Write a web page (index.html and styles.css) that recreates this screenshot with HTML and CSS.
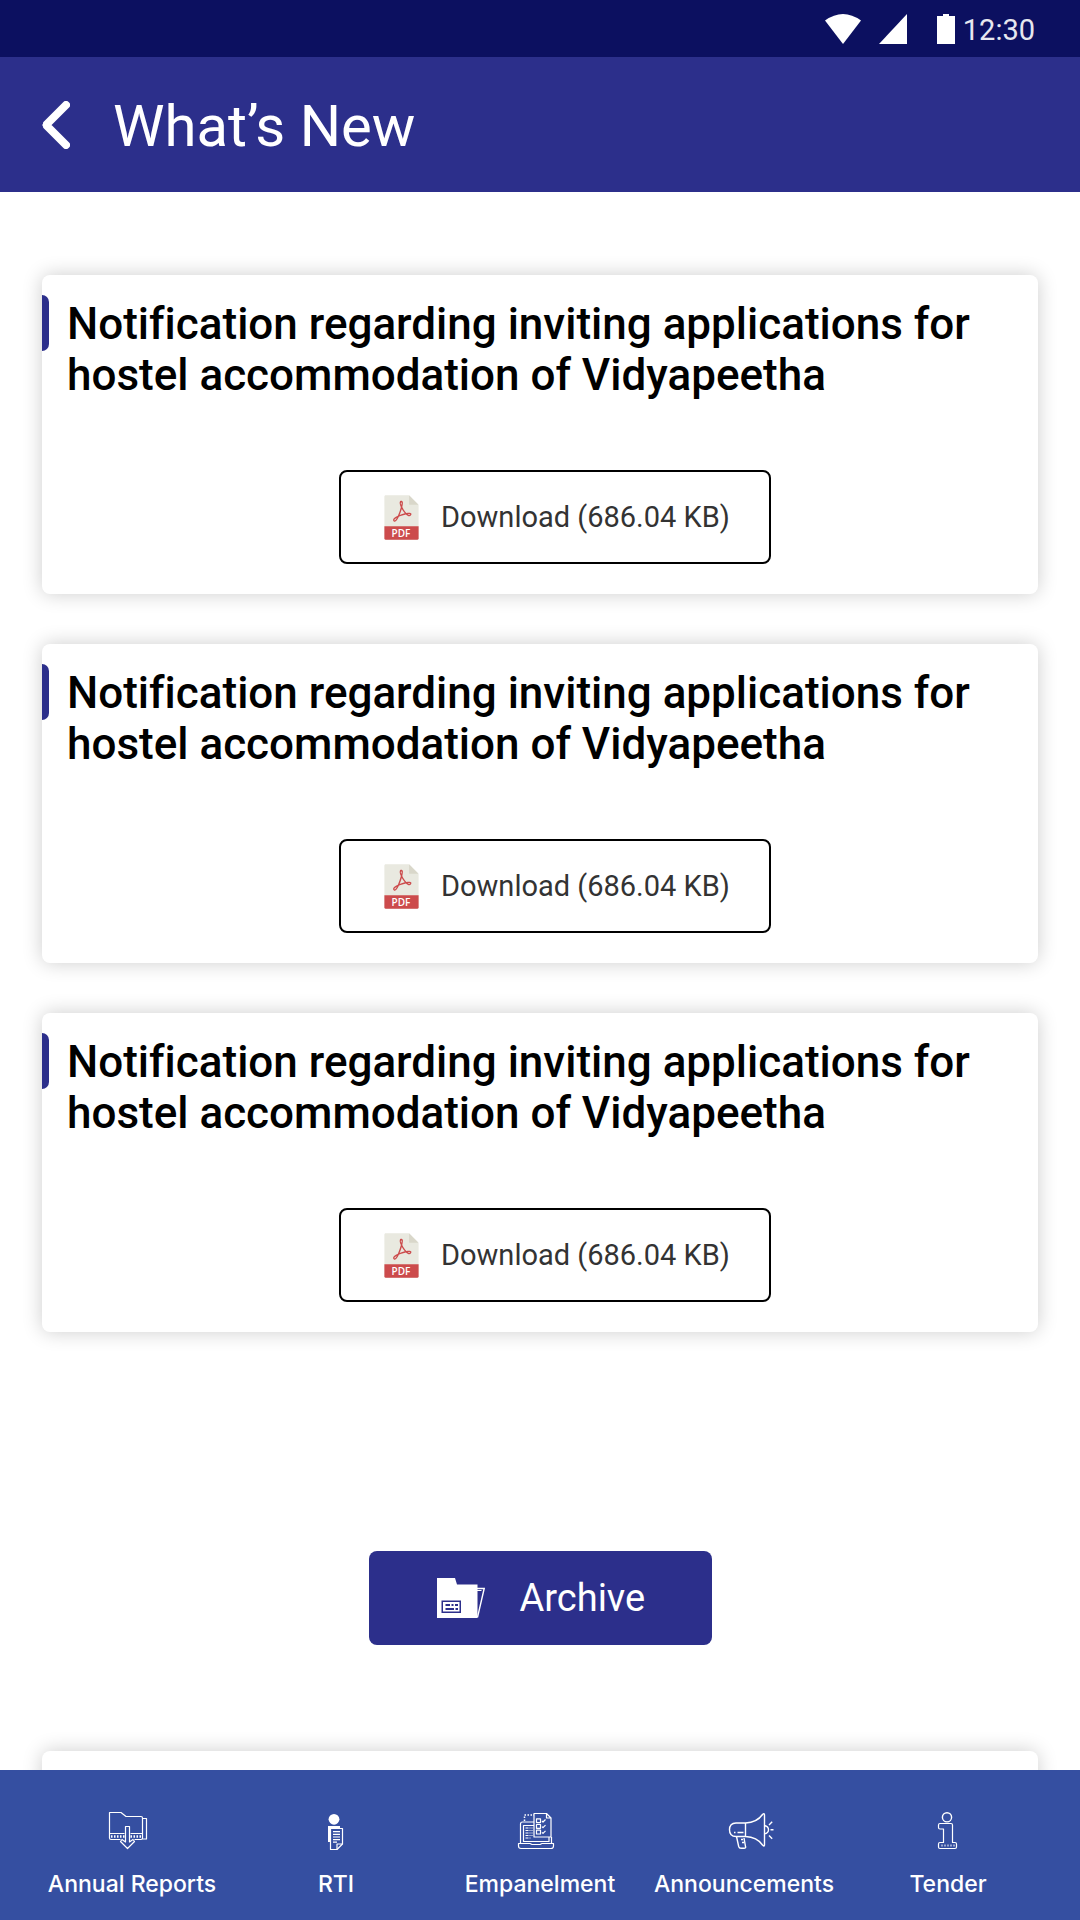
FILE: index.html
```html
<!DOCTYPE html>
<html lang="en">
<head>
<meta charset="utf-8">
<meta name="viewport" content="width=device-width, initial-scale=1">
<title>What’s New</title>
<link rel="stylesheet" href="styles.css">
</head>
<body>
<svg class="sprite" aria-hidden="true">
  <symbol id="pdf" viewBox="6 0 44 56">
    <path fill="#e9e9e0" d="M36.985,0H7.963C7.155,0,6.5,0.655,6.5,1.926V55c0,0.345,0.655,1,1.463,1h40.074c0.808,0,1.463-0.655,1.463-1V12.978c0-0.696-0.093-0.92-0.257-1.085L37.607,0.257C37.442,0.093,37.218,0,36.985,0z"/>
    <path fill="#d9d7ca" d="M37.5,0.151V12h11.849z"/>
    <path fill="#cc4b4c" d="M19.514,33.324L19.514,33.324c-0.348,0-0.682-0.113-0.967-0.326c-1.041-0.781-1.181-1.65-1.115-2.242c0.182-1.628,2.195-3.332,5.985-5.068c1.504-3.296,2.935-7.357,3.788-10.75c-0.998-2.172-1.968-4.99-1.261-6.643c0.248-0.579,0.557-1.023,1.134-1.215c0.228-0.076,0.804-0.172,1.016-0.172c0.504,0,0.947,0.649,1.261,1.049c0.295,0.376,0.964,1.173-0.373,6.802c1.348,2.784,3.258,5.62,5.088,7.562c1.311-0.237,2.439-0.358,3.358-0.358c1.566,0,2.515,0.365,2.902,1.117c0.32,0.622,0.189,1.349-0.39,2.16c-0.557,0.779-1.325,1.191-2.22,1.191c-1.216,0-2.632-0.768-4.211-2.285c-2.837,0.593-6.15,1.651-8.828,2.822c-0.836,1.774-1.637,3.203-2.383,4.251C21.273,32.654,20.389,33.324,19.514,33.324z M22.176,28.198c-2.137,1.201-3.008,2.188-3.071,2.744c-0.01,0.092-0.037,0.334,0.431,0.692C19.685,31.587,20.555,31.19,22.176,28.198z M35.813,23.756c0.815,0.627,1.014,0.944,1.547,0.944c0.234,0,0.901-0.01,1.21-0.441c0.149-0.209,0.207-0.343,0.23-0.415c-0.123-0.065-0.286-0.197-1.175-0.197C37.12,23.648,36.485,23.67,35.813,23.756z M28.343,17.174c-0.715,2.474-1.659,5.145-2.674,7.564c2.09-0.811,4.362-1.519,6.496-2.02C30.815,21.15,29.466,19.192,28.343,17.174z M27.736,8.712c-0.098,0.033-1.33,1.757,0.096,3.216C28.781,9.813,27.779,8.698,27.736,8.712z"/>
    <path fill="#cc4b4c" d="M48.037,56H7.963C7.155,56,6.5,55.345,6.5,54.537V39h43v15.537C49.5,55.345,48.845,56,48.037,56z"/>
  </symbol>
</svg>

<div class="status">
  <svg width="36" height="30" viewBox="0 0 36 30" fill="#fff" aria-hidden="true"><path d="M0 6.500Q18-6.500 36 6.500L18 30z"/></svg>
  <svg width="28" height="30" viewBox="0 0 28 30" fill="#fff" aria-hidden="true"><path d="M28 0v30H0z"/></svg>
  <svg class="battery" width="18" height="30" viewBox="0 0 18 30" fill="#fff" aria-hidden="true"><path d="M6 0h6v2h6v28H0V2h6z"/></svg>
  <span class="time">12:30</span>
</div>

<header class="header">
  <button class="back" aria-label="Back">
    <svg width="28" height="48" viewBox="0 0 28 48" fill="none" stroke="#fff" stroke-width="8" stroke-linecap="round" stroke-linejoin="bevel" aria-hidden="true"><path d="M24 4L4 24l20 20"/><path d="M5 22L3 24l2 2" stroke-width="5" stroke-linejoin="round"/></svg>
  </button>
  <h1 class="title">What’s New</h1>
</header>

<main class="content">
  <article class="card">
    <h2 class="card-title">Notification regarding inviting applications for hostel accommodation of Vidyapeetha</h2>
    <button class="download"><svg width="35" height="45" aria-hidden="true"><use href="#pdf"/><text class="pdf-label" x="17" y="42" text-anchor="middle">PDF</text></svg>Download (686.04 KB)</button>
  </article>
  <article class="card">
    <h2 class="card-title">Notification regarding inviting applications for hostel accommodation of Vidyapeetha</h2>
    <button class="download"><svg width="35" height="45" aria-hidden="true"><use href="#pdf"/><text class="pdf-label" x="17" y="42" text-anchor="middle">PDF</text></svg>Download (686.04 KB)</button>
  </article>
  <article class="card">
    <h2 class="card-title">Notification regarding inviting applications for hostel accommodation of Vidyapeetha</h2>
    <button class="download"><svg width="35" height="45" aria-hidden="true"><use href="#pdf"/><text class="pdf-label" x="17" y="42" text-anchor="middle">PDF</text></svg>Download (686.04 KB)</button>
  </article>
  <button class="archive">
    <svg width="48" height="40" viewBox="0 0 48 40" aria-hidden="true">
      <path fill="#fff" d="M0 0h18l2 6.500h20.500V32L40.500 40H0z"/>
      <path fill="none" stroke="#fff" stroke-width="1.400" d="M40 10.500h7.200L40.500 39.300"/>
      <path fill="none" stroke="#fff" stroke-width="1" d="M40 12.500h4.500"/>
      <path fill="#2c2f8b" d="M4.500 22.500H24V35H4.500zM6 24v9.500h16.500V24z" fill-rule="evenodd"/>
      <path fill="none" stroke="#2c2f8b" stroke-width="2" d="M8.500 27h4.500M14.500 27h2M18 27h3M8.500 31h8.500M18.500 31h2.500"/>
    </svg>
    Archive
  </button>
  <article class="card"></article>
</main>

<nav class="tabs" aria-label="Sections">
  <a class="tab" href="#reports">
    <svg class="tab-icon" viewBox="0 0 60 40" aria-hidden="true">
      <path d="M18.500 28.500H9q-1.500 0-1.500-1.500V1.500H19L24 5.500h15q1.500 0 1.500 1.500v20q0 1.500-1.500 1.500h-6.500M40.500 7.500h4v20.500h-5M7.500 22.500h15M28.500 22.500h12"/>
      <path d="M9 25.500h14M28.500 25.500h11" stroke-width="2.500" stroke-dasharray="1.500 1.500"/>
      <path d="M23.500 15.500h4V31l3.500-2.500 1.500 2L25.500 37.500l-7-7 1.500-2 3.500 2.500z"/>
    </svg>
    Annual Reports
  </a>
  <a class="tab" href="#rti">
    <svg class="tab-icon" viewBox="0 0 60 40" aria-hidden="true">
      <circle class="solid" cx="28" cy="8.300" r="5.400"/>
      <path class="solid" d="M22 15h12v3H24.500v13H22z"/>
      <path d="M24.500 17.500h12V33l-5.500 5.500h-6.500z"/>
      <path d="M27 20.700h7M27 23.300h7M27 26h7M27 28.600h7M27 31.200h4M31 38.500V33h5.500"/>
    </svg>
    RTI
  </a>
  <a class="tab" href="#empanelment">
    <svg class="tab-icon" viewBox="0 0 60 40" aria-hidden="true">
      <path d="M24 11H12.500q-2 0-2 2v19.500M41.500 26v6.500M24 14.500H13.500v16H39V26"/>
      <path d="M8.500 32.500H20l2 1h8l2-1h11.500V35q0 2.500-2.500 2.500H11Q8.500 37.500 8.500 35z"/>
      <path d="M24 2.500h12.500l4.500 4.500V26H24zM36.500 2.500V7H41"/>
      <path d="M26.500 7.800h4v3.800h-4zM26.500 13.500h4v3.800h-4zM26.500 19.200h4v3.800h-4zM32 10l1 1 2.500-2.500M32 15.700l1 1 2.500-2.500M32 21.400l1 1 2.500-2.500"/>
      <path d="M15.500 17h7M15.500 19.500h7M15.500 22h7M15.500 24.500h7M15.500 27h5" stroke-dasharray="3 1 1 1"/>
      <path d="M14.500 10V4H24" stroke-width="1.500" stroke-dasharray="1.500 1.500"/>
    </svg>
    Empanelment
  </a>
  <a class="tab" href="#announcements">
    <svg class="tab-icon" viewBox="0 0 60 40" aria-hidden="true">
      <path stroke-width="1.400" d="M31.500 12H22q-6.500 0-6.500 6.700T22 25.500h9.500zM31.500 12Q43 11.500 48.500 3.500q2-2 2 .500v30q0 2-2 0Q43 26 31.500 25.500M50.500 14.500q4 1 4 4.200t-4 4.200M55 14l3.200-3.300M56.500 18.700h3M55 24.500l3.200 3.300M22.500 25.500l2.200 10q.500 1.800 2.300 1.800h3q2 0 1.500-1.800l-1.500-8.500M27 28.500h2M28 31.500h2M20 21.500h1.500M23.500 21.500h6"/>
    </svg>
    Announcements
  </a>
  <a class="tab" href="#tender">
    <svg class="tab-icon" viewBox="0 0 60 40" aria-hidden="true">
      <circle cx="29" cy="6.300" r="4.600" stroke-width="1.400"/>
      <path d="M22 12.500h11q1.500 0 1.500 1.500v17.500h2.500q1.500 0 1.500 1.500v3q0 1.500-1.500 1.500H22q-1.500 0-1.500-1.500v-3q0-1.500 1.500-1.500h3.500V18H22q-1.500 0-1.500-1.500V14q0-1.500 1.500-1.500z"/>
      <path d="M23.500 34.500h13" stroke-width="2" stroke-dasharray="1 2"/>
    </svg>
    Tender
  </a>
</nav>
</body>
</html>
```

FILE: styles.css
```css
* { box-sizing: border-box; }

body {
  margin: 0;
  height: 100vh;
  display: flex;
  flex-direction: column;
  background: #fff;
  color: #000;
  font-family: Roboto, "Liberation Sans", sans-serif;
}

button {
  border: 0;
  padding: 0;
  background: none;
  color: inherit;
  font: inherit;
  cursor: pointer;
}

svg { flex: none; display: block; }

.sprite { position: absolute; width: 0; height: 0; }

.pdf-label {
  fill: #fff;
  font: 600 10px "Open Sans", sans-serif;
}

.status {
  display: flex;
  justify-content: flex-end;
  align-items: center;
  gap: 18px;
  height: 57px;
  padding-right: 45px;
  background: #0c1060;
  flex: none;
}

.battery { margin-left: 12px; }

.time {
  margin-left: -10px;
  padding-top: 2px;
  color: #e7e7ef;
  font-size: 29px;
  font-weight: 400;
}

.header {
  display: flex;
  align-items: center;
  gap: 43px;
  height: 135px;
  padding: 0 42px;
  background: #2c2f8b;
  color: #fff;
  flex: none;
}

.title {
  margin: 0;
  padding-top: 2px;
  font-size: 58px;
  font-weight: 400;
  line-height: 66px;
}

.content {
  flex: 1;
  min-height: 0;
  overflow: hidden;
  display: flex;
  flex-direction: column;
  gap: 50px;
  padding: 83px 42px 0;
}

.card {
  position: relative;
  flex: none;
  display: flex;
  flex-direction: column;
  align-items: center;
  min-height: 319px;
  padding: 24px 0 30px;
  border-radius: 8px;
  background: #fff;
  box-shadow: 0 0 20px rgba(0, 0, 0, 0.2);
}

.card-title {
  align-self: stretch;
  margin: 0 0 69px;
  padding: 0 25px;
  font-size: 44px;
  font-weight: 500;
  line-height: 51px;
  font-variant-ligatures: none;
}

.card-title::before {
  content: "";
  position: absolute;
  left: 0;
  top: 20px;
  width: 7px;
  height: 56px;
  border-radius: 0 7px 7px 0;
  background: #2c2f8b;
}

.download {
  display: flex;
  align-items: center;
  gap: 22px;
  width: 432px;
  height: 94px;
  margin-left: 30px;
  padding-left: 43px;
  border: 2px solid #000;
  border-radius: 8px;
  color: #333;
  font-size: 29px;
  font-weight: 400;
}

.archive {
  flex: none;
  align-self: center;
  display: flex;
  align-items: center;
  gap: 35px;
  width: 343px;
  height: 94px;
  margin: 169px 0 56px;
  padding-left: 68px;
  border-radius: 8px;
  background: #2c2f8b;
  color: #fff;
  font-size: 38px;
  font-weight: 400;
}

.tabs {
  flex: none;
  display: grid;
  grid-template-columns: repeat(5, 1fr);
  height: 150px;
  padding: 41px 30px 0;
  background: #354fa1;
}

.tab {
  display: flex;
  flex-direction: column;
  align-items: center;
  gap: 18px;
  color: #fff;
  font: 500 23px/30px Inter, "Liberation Sans", sans-serif;
  text-decoration: none;
  white-space: nowrap;
}

.tab-icon {
  width: 60px;
  height: 40px;
  fill: none;
  stroke: #fff;
  stroke-width: 1.2px;
  stroke-linejoin: round;
}

.tab-icon .solid { fill: #fff; stroke: none; }
```
